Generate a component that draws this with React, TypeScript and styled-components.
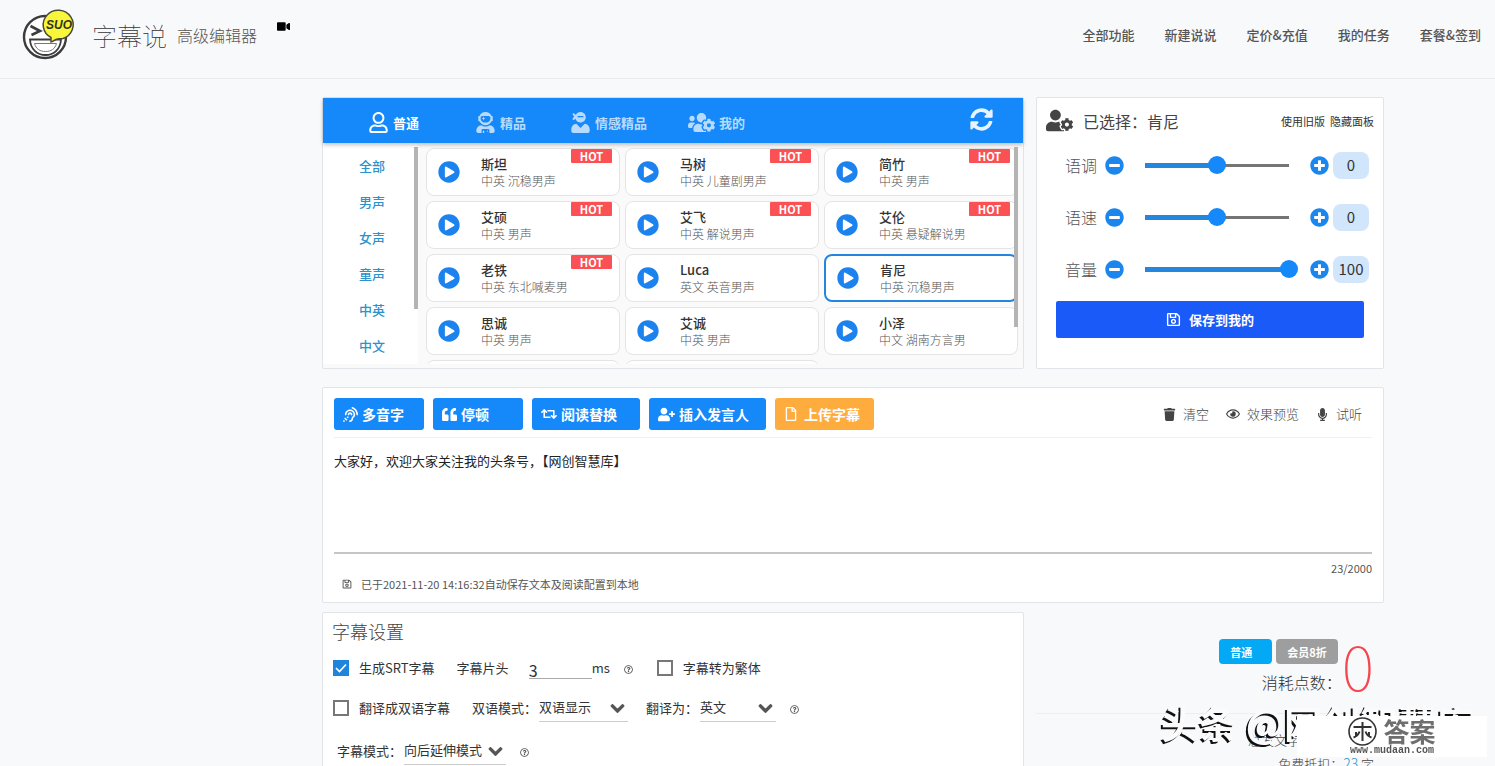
import React, { useState } from "react";
import styled, { createGlobalStyle, css } from "styled-components";
import {
  FaAssistiveListeningSystems,
  FaChevronDown,
  FaMicrophone,
  FaMinusCircle,
  FaPlayCircle,
  FaPlusCircle,
  FaQuoteLeft,
  FaRegEye,
  FaRegFile,
  FaRegQuestionCircle,
  FaRegSave,
  FaRegUser,
  FaRetweet,
  FaSyncAlt,
  FaTrash,
  FaUserAstronaut,
  FaUserCog,
  FaUserNinja,
  FaUserPlus,
  FaUsersCog,
  FaVideo,
} from "react-icons/fa";

const BLUE = "#1588fa";

const GlobalStyle = createGlobalStyle`
  *, *::before, *::after { box-sizing: border-box; }
  html { scrollbar-width: none; }
  body {
    margin: 0;
    background: #f8f9fb;
    color: #444;
    font: 400 13px/20px "Noto Sans CJK SC", sans-serif;
    overflow-x: hidden;
  }
  button, input, select, textarea { font: inherit; color: inherit; }
  button { border: 0; padding: 0; background: none; cursor: pointer; }
  a { color: inherit; text-decoration: none; }
  svg { display: block; flex: none; }
  h1, h2, p, ul { margin: 0; padding: 0; font-weight: inherit; }
  ul { list-style: none; }
`;

/* ---------- header ---------- */

const Header = styled.header`
  display: flex;
  align-items: center;
  height: 79px;
  padding: 0 14px 8px 20px;
  border-bottom: 1px solid #e9ebee;
`;

const Brand = styled.div`
  display: flex;
  align-items: center;
  svg { margin-bottom: 4px; }
`;

const BrandName = styled.h1`
  margin-left: 14px;
  font-size: 25px;
  font-weight: 100;
  line-height: 36px;
  color: #333;
`;

const BrandSub = styled.span`
  margin-left: 10px;
  font-size: 16px;
  font-weight: 300;
  color: #555;
`;

const VideoLink = styled.a`
  align-self: flex-start;
  margin: 20px 0 0 20px;
  color: #000;
`;

const Nav = styled.nav`
  display: flex;
  gap: 30px;
  margin-left: auto;
  font-weight: 500;
  color: #555;
`;

/* ---------- page grid ---------- */

const Main = styled.main`
  padding-left: 211px;
`;

const Container = styled.div`
  max-width: 1062px;
  margin: 18px auto 0;
`;

const Columns = styled.div`
  display: grid;
  grid-template-columns: 702fr 348fr;
  gap: 12px;
`;

const Panel = styled.section`
  background: #fff;
  border: 1px solid #e1e4e8;
  border-radius: 2px;
`;

/* ---------- voice picker ---------- */

const VoicePanel = styled(Panel)`
  display: flex;
  flex-direction: column;
  height: 272px;
  background: #fafafa;
`;

const TabBar = styled.div`
  position: relative;
  z-index: 1;
  display: flex;
  align-items: center;
  height: 45px;
  padding: 4px 30px 0 45px;
  background: ${BLUE};
  box-shadow: 0 2px 4px rgba(0, 0, 0, 0.24);
`;

const Tab = styled.button<{ $active?: boolean; $gap: number }>`
  display: flex;
  align-items: center;
  gap: 4px;
  margin-right: ${(p) => p.$gap}px;
  font-weight: 700;
  color: ${(p) => (p.$active ? "#fff" : "#b8dbfd")};
`;

const Refresh = styled.button`
  margin: -6px 0 0 auto;
  color: #e8f3ff;
`;

const VoiceBody = styled.div`
  display: flex;
  flex: 1;
  min-height: 0;
  padding-bottom: 4px;
`;

const Scroller = styled.div`
  position: relative;
  overflow: hidden;
`;

const Categories = styled(Scroller)`
  width: 95px;
  padding-top: 5px;
  background: #fff;
`;

const Category = styled.button`
  display: block;
  width: 100%;
  height: 36px;
  padding-left: 3px;
  font-weight: 500;
  color: #2a93cc;
`;

const ScrollThumb = styled.i<{ $length: number; $inset: number }>`
  position: absolute;
  top: 4px;
  right: ${(p) => p.$inset}px;
  width: 4px;
  height: ${(p) => p.$length}px;
  background: #b4b4b4;
`;

const VoiceList = styled(Scroller)`
  flex: 1;
  padding: 5px 5px 0 8px;
`;

const VoiceGrid = styled.ul`
  display: grid;
  grid-template-columns: repeat(3, 1fr);
  grid-auto-rows: 48px;
  gap: 5px;
`;

const VoiceCard = styled.li<{ $selected?: boolean }>`
  position: relative;
  display: flex;
  align-items: center;
  gap: 21px;
  padding-left: 11px;
  background: #fff;
  border: 1px solid #e4e4e4;
  border-radius: 8px;
  ${(p) => p.$selected && css`border: 2px solid #2585dd;`}
`;

const PlayButton = styled.button`
  color: #1c83ee;
`;

const VoiceName = styled.div`
  line-height: 18px;
  font-weight: 500;
  color: #333;
`;

const VoiceTags = styled.div`
  font-size: 12px;
  line-height: 16px;
  font-weight: 300;
  color: #555;
`;

const Hot = styled.span`
  position: absolute;
  top: 0;
  right: 7px;
  width: 41px;
  height: 14px;
  border-radius: 1px;
  background: #fb5054;
  color: #fff;
  font-size: 11px;
  font-weight: 700;
  line-height: 14px;
  text-align: center;
`;

/* ---------- selected voice ---------- */

const TunePanel = styled(Panel)`
  padding: 10px 9px;
`;

const TuneHead = styled.div`
  display: flex;
  align-items: center;
  height: 25px;
  margin-bottom: 6px;
`;

const TuneTitle = styled.h2`
  margin-left: 10px;
  font-size: 16px;
  font-weight: 400;
  line-height: 24px;
`;

const TuneLinks = styled.div`
  display: flex;
  gap: 5px;
  margin-left: auto;
  font-size: 11px;
  color: #333;
`;

const TuneRow = styled.div`
  display: flex;
  align-items: center;
  height: 52px;
  padding: 0 5px 0 19px;
`;

const TuneLabel = styled.label`
  width: 40px;
  font-size: 16px;
  font-weight: 300;
  color: #555;
`;

const StepButton = styled.button`
  color: #1a86ee;
`;

const Range = styled.input`
  flex: 1;
  min-width: 0;
  height: 20px;
  margin: 0 12px;
  appearance: none;
  background:
    linear-gradient(#2686dc, #2686dc) 9px center / calc((100% - 18px) * var(--fill)) 5px no-repeat,
    linear-gradient(#757575, #757575) 9px center / calc(100% - 18px) 3px no-repeat;
  &::-webkit-slider-thumb {
    appearance: none;
    width: 18px;
    height: 18px;
    border-radius: 50%;
    background: ${BLUE};
  }
`;

const TuneValue = styled.output`
  width: 36px;
  height: 27px;
  margin-left: 4px;
  border-radius: 8px;
  background: #d1e5fb;
  color: #333;
  font-size: 15px;
  line-height: 26px;
  text-align: center;
`;

const SaveButton = styled.button`
  display: flex;
  align-items: center;
  justify-content: center;
  gap: 8px;
  width: calc(100% - 20px);
  height: 37px;
  margin: 6px 10px 0;
  border-radius: 2px;
  background: #1a5af8;
  color: #fff;
  font-weight: 700;
`;

/* ---------- editor ---------- */

const EditorPanel = styled(Panel)`
  margin-top: 18px;
  padding: 10px 11px 8px;
`;

const Toolbar = styled.div`
  display: flex;
  align-items: center;
  gap: 9px;
  padding-bottom: 7px;
  border-bottom: 1px solid #f0f0f0;
`;

const ToolButton = styled.button<{ $width: number; $warm?: boolean; $gap?: number }>`
  display: flex;
  align-items: center;
  gap: ${(p) => p.$gap ?? 4}px;
  width: ${(p) => p.$width}px;
  height: 32px;
  padding-left: 9px;
  border-radius: 3px;
  background: ${(p) => (p.$warm ? "#ffac3f" : BLUE)};
  color: #fff;
  font-size: 14px;
  font-weight: 700;
  white-space: nowrap;
`;

const Actions = styled.div`
  display: flex;
  gap: 17px;
  margin: 0 10px 0 auto;
`;

const Action = styled.button`
  display: flex;
  align-items: center;
  gap: 7px;
  font-weight: 300;
  svg { color: #444; }
`;

const Editor = styled.textarea`
  display: block;
  width: 100%;
  height: 116px;
  padding: 13px 0;
  border: 0;
  border-bottom: 2px solid #c6c6c6;
  outline: 0;
  resize: none;
  background: none;
  color: #222;
`;

const Counter = styled.div`
  margin-top: 4px;
  font-size: 11px;
  text-align: right;
  color: #555;
`;

const SavedNote = styled.p`
  display: flex;
  align-items: center;
  gap: 9px;
  margin-top: -4px;
  padding-left: 8px;
  font-size: 11px;
  color: #555;
`;

/* ---------- subtitle settings ---------- */

const LowerColumns = styled(Columns)`
  margin-top: 9px;
`;

const SettingsPanel = styled(Panel)`
  padding: 7px 9px 40px;
`;

const SettingsTitle = styled.h2`
  font-size: 18px;
  font-weight: 300;
  line-height: 22px;
`;

const SettingRow = styled.div<{ $indent?: boolean; $height: number }>`
  display: flex;
  align-items: center;
  height: ${(p) => p.$height}px;
  padding-left: ${(p) => (p.$indent ? 5 : 1)}px;
  color: #333;
`;

const CheckLabel = styled.label`
  display: flex;
  align-items: center;
  gap: 10px;
  margin-right: 22px;
`;

const Check = styled.input`
  width: 16px;
  height: 16px;
  margin: 0;
  appearance: none;
  border: 2px solid #777;
  background: #fff;
  &:checked {
    border-color: #1f84dc;
    background: #1f84dc
      url("data:image/svg+xml,%3Csvg xmlns='http://www.w3.org/2000/svg' viewBox='0 0 12 12'%3E%3Cpath d='M1 6l3.5 3.5L11 2.5' fill='none' stroke='white' stroke-width='1.7'/%3E%3C/svg%3E")
      center / 12px no-repeat;
  }
`;

const MsInput = styled.input`
  width: 63px;
  height: 22px;
  margin-left: 20px;
  padding: 4px 0 0;
  border: 0;
  border-bottom: 1px solid #aaa;
  border-radius: 0;
  outline: 0;
  background: none;
  font-size: 16px;
  line-height: 20px;
`;

const Help = styled.button<{ $space?: number }>`
  margin: 2px ${(p) => p.$space ?? 0}px 0 14px;
  color: #555;
`;

const SelectBox = styled.span<{ $width: number; $space?: number }>`
  position: relative;
  width: ${(p) => p.$width}px;
  margin: 0 ${(p) => p.$space ?? 0}px 0 2px;
  svg {
    position: absolute;
    top: 7px;
    right: 3px;
    color: #555;
    stroke: currentColor;
    stroke-width: 36px;
    pointer-events: none;
  }
`;

const Select = styled.select`
  display: block;
  width: 100%;
  height: 28px;
  padding: 0 0 2px;
  appearance: none;
  border: 0;
  border-bottom: 1px solid #ccc;
  border-radius: 0;
  outline: 0;
  background: none;
`;

/* ---------- cost summary ---------- */

const Summary = styled.aside`
  padding-top: 27px;
`;

const CostRow = styled.div`
  display: flex;
  justify-content: flex-end;
  height: 75px;
  padding-right: 10px;
  border-bottom: 1px solid #eceef0;
`;

const CostInfo = styled.div`
  display: flex;
  flex-direction: column;
  align-items: flex-end;
  gap: 8px;
`;

const Plans = styled.div`
  display: flex;
  gap: 4px;
  margin-right: 4px;
`;

const Plan = styled.button<{ $active?: boolean }>`
  height: 25px;
  padding: 0 ${(p) => (p.$active ? 20 : 11)}px 0 11px;
  border-radius: 4px;
  background: ${(p) => (p.$active ? "#03a9f4" : "#9e9e9e")};
  color: #fff;
  font-size: 11px;
  font-weight: 700;
`;

const CostLabel = styled.span`
  font-size: 16px;
  font-weight: 300;
  color: #333;
`;

const Cost = styled.strong`
  font-size: 62px;
  font-weight: 100;
  line-height: 50px;
  color: #f5474f;
`;

const SummaryLine = styled.p<{ $inset: number }>`
  height: 23px;
  padding-right: ${(p) => p.$inset}px;
  text-align: right;
  font-weight: 300;
  color: #444;
  b { font-size: 14px; font-weight: 300; color: #2a93cc; }
`;

const SummaryLines = styled.div`
  padding-top: 16px;
`;

/* ---------- watermarks ---------- */

const Byline = styled.div`
  position: fixed;
  right: 21px;
  bottom: 20px;
  color: #fbfbfc;
  font-size: 38px;
  font-weight: 700;
  line-height: 48px;
  white-space: nowrap;
  text-shadow: -2px 2px 0 #111;
`;

const Stamp = styled.div`
  position: fixed;
  right: 8px;
  bottom: 9px;
  display: flex;
  flex-direction: column;
  align-items: center;
  width: 190px;
  height: 41px;
  background: #fff;
`;

const StampTop = styled.div`
  display: flex;
  align-items: center;
  gap: 6px;
  height: 30px;
  color: #6e6e6e;
  font-size: 26px;
  font-weight: 700;
  line-height: 30px;
`;

const StampUrl = styled.span`
  color: #555;
  font: 700 10px/10px "Liberation Mono", monospace;
`;

/* ---------- data ---------- */

const categories = ["全部", "男声", "女声", "童声", "中英", "中文"];

type Voice = { name: string; tags: string; hot?: boolean };

const voices: Voice[] = [
  { name: "斯坦", tags: "中英 沉稳男声", hot: true },
  { name: "马树", tags: "中英 儿童剧男声", hot: true },
  { name: "简竹", tags: "中英 男声", hot: true },
  { name: "艾硕", tags: "中英 男声", hot: true },
  { name: "艾飞", tags: "中英 解说男声", hot: true },
  { name: "艾伦", tags: "中英 悬疑解说男", hot: true },
  { name: "老铁", tags: "中英 东北喊麦男", hot: true },
  { name: "Luca", tags: "英文 英音男声" },
  { name: "肯尼", tags: "中英 沉稳男声" },
  { name: "思诚", tags: "中英 男声" },
  { name: "艾诚", tags: "中英 男声" },
  { name: "小泽", tags: "中文 湖南方言男" },
  { name: "", tags: "" },
  { name: "", tags: "" },
];

const Logo = () => (
  <svg width="58" height="58" viewBox="0 0 58 58" fill="none" role="img" aria-label="字幕说">
    <circle cx="25" cy="33" r="21" stroke="#3c3c3e" strokeWidth="2.4" fill="#fff" />
    <path d="M10.500 22l9.500 5-8.500 4" stroke="#3c3c3e" strokeWidth="2.600" />
    <path d="M10 35.500h31c-.5 9.500-7 15.500-15.500 15.500S10.500 45 10 35.500z" stroke="#3c3c3e" strokeWidth="1.800" />
    <path d="M14.500 39.500h22c-1.500 5.500-5.500 8-11 8s-9.500-2.500-11-8z" stroke="#777" strokeWidth="1" />
    <path d="M31 38l0-4.500A15 14.500 0 1 1 43 34.500c-3.500.5-5 .2-7 1-2 .8-3 2.500-5 2.500z" fill="#f8f53a" stroke="#4a4a3c" strokeWidth="1.500" />
    <text x="39" y="25" textAnchor="middle" fontFamily="Liberation Sans, sans-serif" fontSize="12" fontWeight="700" fontStyle="italic" fill="#33331e">SUO</text>
  </svg>
);

const StampMark = () => (
  <svg width="29" height="29" viewBox="0 0 29 29" fill="none" stroke="#333">
    <circle cx="14.500" cy="14.500" r="13.500" strokeWidth="1.600" />
    <path d="M5.500 10h18M14.500 5v19M11.500 14.500c-1 3-3 5-6 6M17.500 14.500c1 3 3 5 6 6M8 15v4M21 15v4" strokeWidth="2" />
  </svg>
);

function Tuner({ label, initial, min }: { label: string; initial: number; min: number }) {
  const [value, setValue] = useState(initial);
  const id = `tune-${label}`;
  const fill = (value - min) / (100 - min);
  return (
    <TuneRow>
      <TuneLabel htmlFor={id}>{label}</TuneLabel>
      <StepButton aria-label={`${label}减`} onClick={() => setValue(Math.max(min, value - 1))}>
        <FaMinusCircle size={19} />
      </StepButton>
      <Range
        id={id}
        type="range"
        min={min}
        max={100}
        value={value}
        onChange={(e) => setValue(Number(e.target.value))}
        style={{ "--fill": fill } as React.CSSProperties}
      />
      <StepButton aria-label={`${label}加`} onClick={() => setValue(Math.min(100, value + 1))}>
        <FaPlusCircle size={19} />
      </StepButton>
      <TuneValue htmlFor={id}>{value}</TuneValue>
    </TuneRow>
  );
}

function Dropdown({ id, options, width, space }: { id: string; options: string[]; width: number; space?: number }) {
  return (
    <SelectBox $width={width} $space={space}>
      <Select id={id}>
        {options.map((o) => (
          <option key={o}>{o}</option>
        ))}
      </Select>
      <FaChevronDown size={15} />
    </SelectBox>
  );
}

export default function App() {
  const [text, setText] = useState("大家好，欢迎大家关注我的头条号，【网创智慧库】");
  const [selected, setSelected] = useState("肯尼");

  return (
    <>
      <GlobalStyle />
      <Header>
        <Brand>
          <Logo />
          <BrandName>字幕说</BrandName>
          <BrandSub>高级编辑器</BrandSub>
        </Brand>
        <VideoLink href="#video" aria-label="视频教程">
          <FaVideo size={13} />
        </VideoLink>
        <Nav>
          <a href="#features">全部功能</a>
          <a href="#new">新建说说</a>
          <a href="#pricing">定价&amp;充值</a>
          <a href="#tasks">我的任务</a>
          <a href="#plans">套餐&amp;签到</a>
        </Nav>
      </Header>

      <Main>
        <Container>
          <Columns>
            <VoicePanel>
              <TabBar>
                <Tab $active $gap={56}><FaRegUser size={21} />普通</Tab>
                <Tab $gap={44}><FaUserAstronaut size={21} />精品</Tab>
                <Tab $gap={41}><FaUserNinja size={21} />情感精品</Tab>
                <Tab $gap={0}><FaUsersCog size={27} />我的</Tab>
                <Refresh aria-label="刷新"><FaSyncAlt size={23} /></Refresh>
              </TabBar>
              <VoiceBody>
                <Categories>
                  {categories.map((c) => (
                    <Category key={c}>{c}</Category>
                  ))}
                  <ScrollThumb $length={162} $inset={0} />
                </Categories>
                <VoiceList>
                  <VoiceGrid>
                    {voices.map((v, i) => (
                      <VoiceCard key={i} $selected={v.name === selected} onClick={() => setSelected(v.name)}>
                        <PlayButton aria-label={`试听${v.name}`}><FaPlayCircle size={22} /></PlayButton>
                        <div>
                          <VoiceName>{v.name}</VoiceName>
                          <VoiceTags>{v.tags}</VoiceTags>
                        </div>
                        {v.hot && <Hot>HOT</Hot>}
                      </VoiceCard>
                    ))}
                  </VoiceGrid>
                  <ScrollThumb $length={180} $inset={5} />
                </VoiceList>
              </VoiceBody>
            </VoicePanel>

            <TunePanel>
              <TuneHead>
                <FaUserCog size={27} />
                <TuneTitle>已选择：{selected}</TuneTitle>
                <TuneLinks>
                  <a href="#legacy">使用旧版</a>
                  <a href="#hide">隐藏面板</a>
                </TuneLinks>
              </TuneHead>
              <Tuner label="语调" initial={0} min={-100} />
              <Tuner label="语速" initial={0} min={-100} />
              <Tuner label="音量" initial={100} min={0} />
              <SaveButton><FaRegSave size={15} />保存到我的</SaveButton>
            </TunePanel>
          </Columns>

          <EditorPanel>
            <Toolbar>
              <ToolButton $width={90}><FaAssistiveListeningSystems size={15} />多音字</ToolButton>
              <ToolButton $width={90}><FaQuoteLeft size={15} />停顿</ToolButton>
              <ToolButton $width={108}><FaRetweet size={16} />阅读替换</ToolButton>
              <ToolButton $width={117}><FaUserPlus size={17} />插入发言人</ToolButton>
              <ToolButton $width={99} $warm $gap={6}><FaRegFile size={14} />上传字幕</ToolButton>
              <Actions>
                <Action><FaTrash size={13} />清空</Action>
                <Action><FaRegEye size={14} />效果预览</Action>
                <Action><FaMicrophone size={13} />试听</Action>
              </Actions>
            </Toolbar>
            <Editor aria-label="配音文本" value={text} onChange={(e) => setText(e.target.value)} spellCheck={false} />
            <Counter>{text.length}/2000</Counter>
            <SavedNote>
              <FaRegSave size={10} />
              已于2021-11-20 14:16:32自动保存文本及阅读配置到本地
            </SavedNote>
          </EditorPanel>

          <LowerColumns>
            <SettingsPanel>
              <SettingsTitle>字幕设置</SettingsTitle>
              <SettingRow $height={52}>
                <CheckLabel><Check type="checkbox" defaultChecked />生成SRT字幕</CheckLabel>
                <label htmlFor="lead-in">字幕片头</label>
                <MsInput id="lead-in" defaultValue="3" />
                ms
                <Help $space={24} aria-label="片头说明"><FaRegQuestionCircle size={9} /></Help>
                <CheckLabel><Check type="checkbox" />字幕转为繁体</CheckLabel>
              </SettingRow>
              <SettingRow $height={28}>
                <CheckLabel><Check type="checkbox" />翻译成双语字幕</CheckLabel>
                <label htmlFor="bilingual">双语模式：</label>
                <Dropdown id="bilingual" options={["双语显示", "仅译文"]} width={89} space={18} />
                <label htmlFor="language">翻译为：</label>
                <Dropdown id="language" options={["英文", "日文"]} width={76} />
                <Help aria-label="翻译说明"><FaRegQuestionCircle size={9} /></Help>
              </SettingRow>
              <SettingRow $height={58} $indent>
                <label htmlFor="mode">字幕模式：</label>
                <Dropdown id="mode" options={["向后延伸模式", "标准模式"]} width={102} />
                <Help aria-label="模式说明"><FaRegQuestionCircle size={9} /></Help>
              </SettingRow>
            </SettingsPanel>

            <Summary>
              <CostRow>
                <CostInfo>
                  <Plans>
                    <Plan $active>普通</Plan>
                    <Plan>会员8折</Plan>
                  </Plans>
                  <CostLabel>消耗点数：</CostLabel>
                </CostInfo>
                <Cost>0</Cost>
              </CostRow>
              <SummaryLines>
                <SummaryLine $inset={71}>总发文字：</SummaryLine>
                <SummaryLine $inset={10}>免费抵扣：<b>23</b> 字</SummaryLine>
              </SummaryLines>
            </Summary>
          </LowerColumns>
        </Container>
      </Main>

      <Byline>头条 @网创智慧库</Byline>
      <Stamp>
        <StampTop><StampMark />答案</StampTop>
        <StampUrl>www.mudaan.com</StampUrl>
      </Stamp>
    </>
  );
}
